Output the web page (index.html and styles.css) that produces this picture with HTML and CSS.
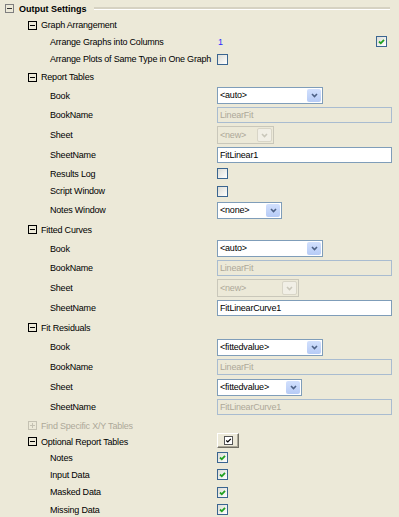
FILE: index.html
```html
<!DOCTYPE html>
<html lang="en">
<head>
    <meta charset="UTF-8">
    <title>Output Settings</title>
    <link rel="stylesheet" href="styles.css">
</head>
<body>
    <div class="tree">
        <!-- Top level branch -->
        <div class="row title h17">
            <svg class="tog" width="9" height="9" viewBox="0 0 9 9"><rect x=".5" y=".5" width="8" height="8" fill="none" stroke="#7f7f7f"/><path d="M2 4.5h5" stroke="#333"/></svg>
            <span class="ttl">Output Settings</span>
            <span class="rule"></span>
        </div>

        <!-- Graph Arrangement -->
        <div class="row group h16">
            <svg class="tog" width="9" height="9" viewBox="0 0 9 9"><rect x=".5" y=".5" width="8" height="8" fill="none" stroke="#000"/><path d="M2 4.5h5" stroke="#000"/></svg>
            <span class="glabel">Graph Arrangement</span>
        </div>
        <div class="row item h17">
            <span class="label">Arrange Graphs into Columns</span>
            <span class="num">1</span>
            <span class="cb on right"><svg width="9" height="9" viewBox="0 0 9 9"><path d="M2 4.5l1.8 1.8L7 2.8" fill="none" stroke="#21a121" stroke-width="1.8"/></svg></span>
        </div>
        <div class="row item h18">
            <span class="label">Arrange Plots of Same Type in One Graph</span>
            <span class="cb"></span>
        </div>

        <!-- Report Tables -->
        <div class="row group h18">
            <svg class="tog" width="9" height="9" viewBox="0 0 9 9"><rect x=".5" y=".5" width="8" height="8" fill="none" stroke="#000"/><path d="M2 4.5h5" stroke="#000"/></svg>
            <span class="glabel">Report Tables</span>
        </div>
        <div class="row item h19">
            <span class="label">Book</span>
            <span class="sel w106"><span class="val">&lt;auto&gt;</span><span class="arr"><svg width="7" height="5" viewBox="0 0 7 5"><path d="M1 1l2.5 2.5L6 1" fill="none" stroke="#4d6185" stroke-width="1.6"/></svg></span></span>
        </div>
        <div class="row item h20">
            <span class="label">BookName</span>
            <span class="txt off">LinearFit</span>
        </div>
        <div class="row item h20">
            <span class="label">Sheet</span>
            <span class="sel off w57"><span class="val">&lt;new&gt;</span><span class="arr"><svg width="7" height="5" viewBox="0 0 7 5"><path d="M1 1l2.5 2.5L6 1" fill="none" stroke="#c9c7ba" stroke-width="1.6"/></svg></span></span>
        </div>
        <div class="row item h20">
            <span class="label">SheetName</span>
            <span class="txt">FitLinear1</span>
        </div>
        <div class="row item h17">
            <span class="label">Results Log</span>
            <span class="cb"></span>
        </div>
        <div class="row item h18">
            <span class="label">Script Window</span>
            <span class="cb"></span>
        </div>
        <div class="row item h20">
            <span class="label">Notes Window</span>
            <span class="sel w65"><span class="val">&lt;none&gt;</span><span class="arr"><svg width="7" height="5" viewBox="0 0 7 5"><path d="M1 1l2.5 2.5L6 1" fill="none" stroke="#4d6185" stroke-width="1.6"/></svg></span></span>
        </div>

        <!-- Fitted Curves -->
        <div class="row group h19">
            <svg class="tog" width="9" height="9" viewBox="0 0 9 9"><rect x=".5" y=".5" width="8" height="8" fill="none" stroke="#000"/><path d="M2 4.5h5" stroke="#000"/></svg>
            <span class="glabel">Fitted Curves</span>
        </div>
        <div class="row item h19">
            <span class="label">Book</span>
            <span class="sel w106"><span class="val">&lt;auto&gt;</span><span class="arr"><svg width="7" height="5" viewBox="0 0 7 5"><path d="M1 1l2.5 2.5L6 1" fill="none" stroke="#4d6185" stroke-width="1.6"/></svg></span></span>
        </div>
        <div class="row item h20">
            <span class="label">BookName</span>
            <span class="txt off">LinearFit</span>
        </div>
        <div class="row item h20">
            <span class="label">Sheet</span>
            <span class="sel off w82"><span class="val">&lt;new&gt;</span><span class="arr"><svg width="7" height="5" viewBox="0 0 7 5"><path d="M1 1l2.5 2.5L6 1" fill="none" stroke="#c9c7ba" stroke-width="1.6"/></svg></span></span>
        </div>
        <div class="row item h20">
            <span class="label">SheetName</span>
            <span class="txt">FitLinearCurve1</span>
        </div>

        <!-- Fit Residuals -->
        <div class="row group h19">
            <svg class="tog" width="9" height="9" viewBox="0 0 9 9"><rect x=".5" y=".5" width="8" height="8" fill="none" stroke="#000"/><path d="M2 4.5h5" stroke="#000"/></svg>
            <span class="glabel">Fit Residuals</span>
        </div>
        <div class="row item h20">
            <span class="label">Book</span>
            <span class="sel w106"><span class="val">&lt;fittedvalue&gt;</span><span class="arr"><svg width="7" height="5" viewBox="0 0 7 5"><path d="M1 1l2.5 2.5L6 1" fill="none" stroke="#4d6185" stroke-width="1.6"/></svg></span></span>
        </div>
        <div class="row item h20">
            <span class="label">BookName</span>
            <span class="txt off">LinearFit</span>
        </div>
        <div class="row item h20">
            <span class="label">Sheet</span>
            <span class="sel w85"><span class="val">&lt;fittedvalue&gt;</span><span class="arr"><svg width="7" height="5" viewBox="0 0 7 5"><path d="M1 1l2.5 2.5L6 1" fill="none" stroke="#4d6185" stroke-width="1.6"/></svg></span></span>
        </div>
        <div class="row item h20">
            <span class="label">SheetName</span>
            <span class="txt off">FitLinearCurve1</span>
        </div>

        <!-- Disabled branch -->
        <div class="row group dim h17">
            <svg class="tog" width="9" height="9" viewBox="0 0 9 9"><rect x=".5" y=".5" width="8" height="8" fill="none" stroke="#c4c1b2"/><path d="M2 4.5h5M4.5 2v5" stroke="#c4c1b2"/></svg>
            <span class="glabel">Find Specific X/Y Tables</span>
        </div>

        <!-- Optional Report Tables -->
        <div class="row group h15">
            <svg class="tog" width="9" height="9" viewBox="0 0 9 9"><rect x=".5" y=".5" width="8" height="8" fill="none" stroke="#000"/><path d="M2 4.5h5" stroke="#000"/></svg>
            <span class="glabel wide">Optional Report Tables</span>
            <span class="btn"><svg width="9" height="9" viewBox="0 0 9 9"><rect x=".5" y=".5" width="8" height="8" fill="#fff" stroke="#555"/><path d="M2.3 4.5l1.5 1.5L6.8 2.8" fill="none" stroke="#000" stroke-width="1.2"/></svg></span>
        </div>
        <div class="row item h17">
            <span class="label">Notes</span>
            <span class="cb on"><svg width="9" height="9" viewBox="0 0 9 9"><path d="M2 4.5l1.8 1.8L7 2.8" fill="none" stroke="#21a121" stroke-width="1.8"/></svg></span>
        </div>
        <div class="row item h17">
            <span class="label">Input Data</span>
            <span class="cb on"><svg width="9" height="9" viewBox="0 0 9 9"><path d="M2 4.5l1.8 1.8L7 2.8" fill="none" stroke="#21a121" stroke-width="1.8"/></svg></span>
        </div>
        <div class="row item h18">
            <span class="label">Masked Data</span>
            <span class="cb on"><svg width="9" height="9" viewBox="0 0 9 9"><path d="M2 4.5l1.8 1.8L7 2.8" fill="none" stroke="#21a121" stroke-width="1.8"/></svg></span>
        </div>
        <div class="row item h17">
            <span class="label">Missing Data</span>
            <span class="cb on"><svg width="9" height="9" viewBox="0 0 9 9"><path d="M2 4.5l1.8 1.8L7 2.8" fill="none" stroke="#21a121" stroke-width="1.8"/></svg></span>
        </div>
    </div>
</body>
</html>
```

FILE: styles.css
```css
/* Classic XP style property tree */
body {
    margin: 0;
    background-color: #ece9d8;
    font-family: "Liberation Sans", Arial, sans-serif;
    font-size: 9px;
    letter-spacing: -0.2px;
    color: #000;
}
.tree {
    overflow: hidden;
}
/* Rows */
.row {
    display: flex;
    align-items: center;
    height: 18px;
    white-space: nowrap;
}
.h15 { height: 15px; }
.h16 { height: 16px; }
.h17 { height: 17px; }
.h18 { height: 18px; }
.h19 { height: 19px; }
.h20 { height: 20px; }
.tog {
    flex: none;
}
/* Top level title with groove line */
.title {
    padding-left: 5px;
}
.ttl {
    margin-left: 5px;
    font-weight: bold;
    letter-spacing: 0;
}
.rule {
    flex: 1;
    height: 0;
    margin: 0 9px 0 7px;
    border-top: 2px solid #d6d2c2;
    border-bottom: 1px solid #fff;
}
/* Group headers */
.group {
    padding-left: 28px;
}
.glabel {
    margin-left: 4px;
}
.glabel.wide {
    width: 176px;
}
.dim .glabel {
    color: #aca899;
}
/* Leaf items */
.item {
    padding-left: 50px;
}
.label {
    flex: 0 0 167px;
}
.num {
    margin-left: 1px;
    color: #2a2aff;
}
/* Checkboxes */
.cb {
    flex: none;
    width: 11px;
    height: 11px;
    box-sizing: border-box;
    border: 1px solid #3a6590;
    background: linear-gradient(135deg, #dcdcd5, #fff);
    display: flex;
    align-items: center;
    justify-content: center;
}
.cb.right {
    margin-left: auto;
    margin-right: 12px;
}
/* Text boxes */
.txt {
    width: 175px;
    height: 16px;
    box-sizing: border-box;
    border: 1px solid #7f9db9;
    background: #fff;
    padding-left: 2px;
    line-height: 14px;
}
.txt.off {
    border-color: #a9bcd0;
    background: #ece9d8;
    color: #aca899;
}
/* Drop downs */
.sel {
    display: flex;
    height: 17px;
    box-sizing: border-box;
    border: 1px solid #7f9db9;
    background: #fff;
}
.sel .val {
    flex: 1;
    padding-left: 2px;
    line-height: 15px;
}
.sel .arr {
    width: 14px;
    margin: 1px;
    border-radius: 2px;
    background: linear-gradient(#d2e0fd, #b6cbf6);
    display: flex;
    align-items: center;
    justify-content: center;
}
.sel.off {
    height: 18px;
    border-color: #c9c7ba;
    background: #ece9d8;
    color: #aca899;
}
.sel.off .val {
    line-height: 16px;
}
.sel.off .arr {
    width: 13px;
    border: 1px solid #d8d5c7;
    background: #f1efe6;
}
.w57 { width: 57px; }
.w65 { width: 65px; }
.w82 { width: 82px; }
.w85 { width: 85px; }
.w106 { width: 106px; }
/* Small push button */
.btn {
    width: 22px;
    height: 15px;
    box-sizing: border-box;
    border: 1px solid;
    border-color: #fff #716f64 #716f64 #fff;
    box-shadow: inset -1px -1px #aca899;
    background: #ece9d8;
    display: flex;
    align-items: center;
    justify-content: center;
    margin-top: -2px;
}
```
